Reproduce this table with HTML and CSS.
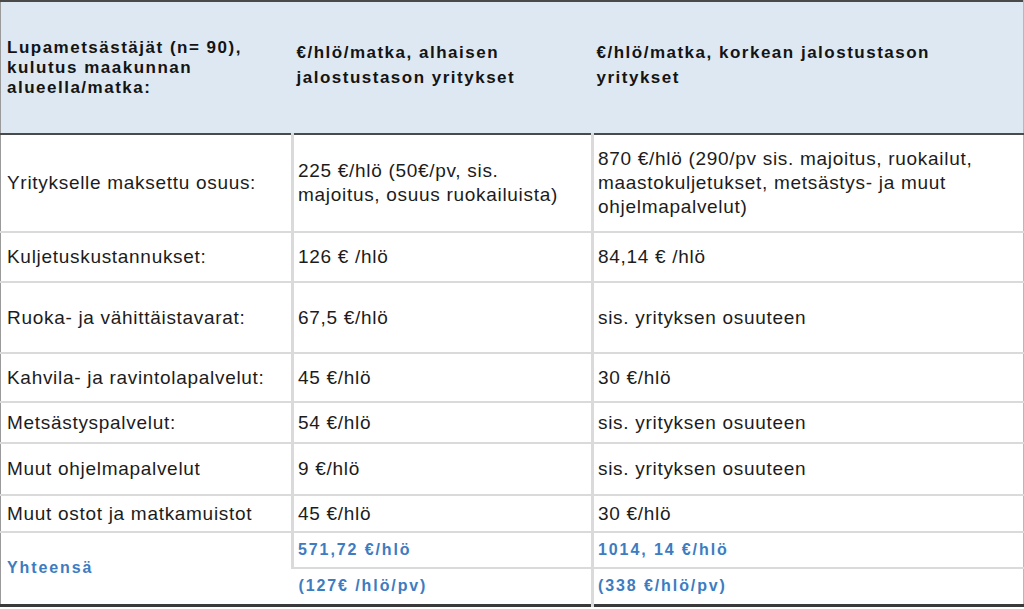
FILE: index.html
```html
<!DOCTYPE html>
<html lang="fi">
<head>
<meta charset="utf-8">
<title>Lupametsästäjät</title>
<link rel="stylesheet" href="styles.css">
</head>
<body>
<table class="grid">
  <colgroup>
    <col class="c1">
    <col class="c2">
    <col class="c3">
  </colgroup>
  <thead>
    <tr class="head">
      <th class="h1">Lupametsästäjät (n= 90),<br>kulutus maakunnan<br>alueella/matka:</th>
      <th class="h2">€/hlö/matka, alhaisen<br>jalostustason yritykset</th>
      <th class="h2">€/hlö/matka, korkean jalostustason<br>yritykset</th>
    </tr>
  </thead>
  <tbody>
    <tr class="r1">
      <td>Yritykselle maksettu osuus:</td>
      <td>225 €/hlö (50€/pv, sis.<br>majoitus, osuus ruokailuista)</td>
      <td>870 €/hlö (290/pv sis. majoitus, ruokailut,<br>maastokuljetukset, metsästys- ja muut<br>ohjelmapalvelut)</td>
    </tr>
    <tr class="r2">
      <td>Kuljetuskustannukset:</td>
      <td>126 € /hlö</td>
      <td>84,14 € /hlö</td>
    </tr>
    <tr class="r3">
      <td>Ruoka- ja vähittäistavarat:</td>
      <td>67,5 €/hlö</td>
      <td>sis. yrityksen osuuteen</td>
    </tr>
    <tr class="r4">
      <td>Kahvila- ja ravintolapalvelut:</td>
      <td>45 €/hlö</td>
      <td>30 €/hlö</td>
    </tr>
    <tr class="r5">
      <td>Metsästyspalvelut:</td>
      <td>54 €/hlö</td>
      <td>sis. yrityksen osuuteen</td>
    </tr>
    <tr class="r6">
      <td>Muut ohjelmapalvelut</td>
      <td>9 €/hlö</td>
      <td>sis. yrityksen osuuteen</td>
    </tr>
    <tr class="r7">
      <td>Muut ostot ja matkamuistot</td>
      <td>45 €/hlö</td>
      <td>30 €/hlö</td>
    </tr>
    <tr class="t1">
      <td class="total" rowspan="2">Yhteensä</td>
      <td class="total">571,72 €/hlö</td>
      <td class="total">1014, 14 €/hlö</td>
    </tr>
    <tr class="t2">
      <td class="total">(127€ /hlö/pv)</td>
      <td class="total">(338 €/hlö/pv)</td>
    </tr>
  </tbody>
</table>
</body>
</html>
```

FILE: styles.css
```css
html, body {
  margin: 0;
  padding: 0;
  background: #ffffff;
}

.grid {
  width: 1023px;
  border-collapse: collapse;
  table-layout: fixed;
  font-family: "Liberation Sans", Arial, sans-serif;
  color: #1c1c1c;
  border-top: 2px solid #4a4a4a;
  border-bottom: 3px solid #3a3a3a;
  border-left: 1px solid #9a9a9a;
  border-right: 2px solid #b8b8b8;
}

.c1 { width: 292px; }
.c2 { width: 300px; }
.c3 { width: 431px; }

.head {
  height: 133px;
  background: #dde8f3;
}

.head th {
  text-align: left;
  font-weight: bold;
  font-size: 17px;
  letter-spacing: 1.5px;
  vertical-align: middle;
  border-bottom: 2px solid #4a4a4a;
  padding: 0 0 0 5px;
  color: #141414;
  white-space: nowrap;
}

.head .h1 {
  line-height: 20px;
  padding-left: 6px;
}

.head .h2 {
  line-height: 25px;
  padding-bottom: 6px;
  padding-left: 4px;
}

tbody td {
  font-size: 19px;
  line-height: 24px;
  vertical-align: middle;
  padding: 0 0 0 4px;
  border-bottom: 2px solid #dadada;
  border-left: 3px solid #dadada;
  letter-spacing: 0.7px;
  white-space: nowrap;
}

tbody td:first-child {
  border-left: none;
  padding-left: 6px;
}

.r1 { height: 98px; }
.r2 { height: 50px; }
.r3 { height: 71px; }
.r4 { height: 49px; }
.r5 { height: 41px; }
.r6 { height: 52px; }
.r7 { height: 37px; }
.t1 { height: 36px; }
.t2 { height: 37px; }

tbody .total {
  color: #3d7cc0;
  font-weight: bold;
  font-size: 16px;
  letter-spacing: 1.9px;
}

.t2 td {
  border-bottom: none;
}

tbody td.total[rowspan] {
  border-bottom: none;
}
```
